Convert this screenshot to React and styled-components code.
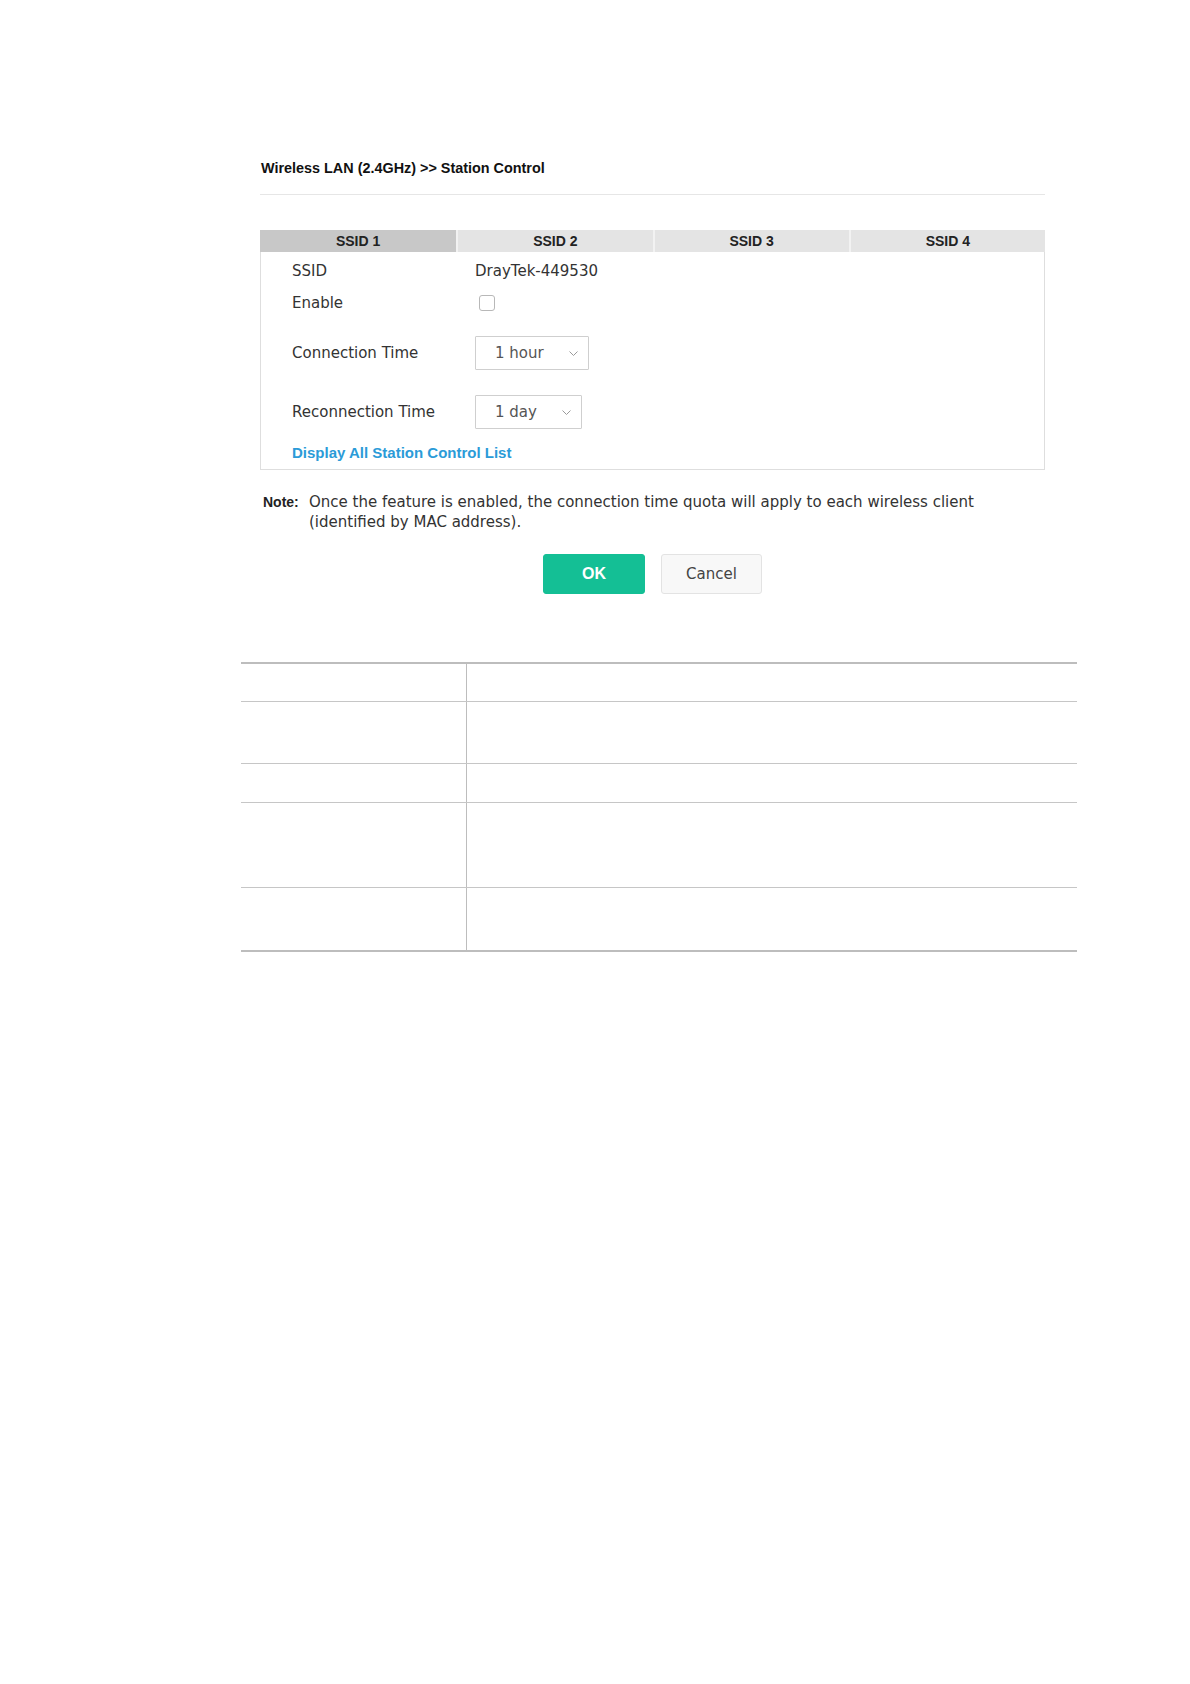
import React from 'react'
import styled, { createGlobalStyle } from 'styled-components'

const GlobalStyle = createGlobalStyle`
  body {
    margin: 0;
    background: #fff;
    font-family: "DejaVu Sans", "Liberation Sans", sans-serif;
    color: #333;
  }
`

const Page = styled.div`
  padding: 158px 0 120px;
`

const Form = styled.section`
  margin-left: 260px;
  width: 785px;
`

const Title = styled.h1`
  margin: 0;
  padding-left: 1px;
  font: bold 14.4px/20px "Liberation Sans", Arial, sans-serif;
  color: #111;
`

const Divider = styled.div`
  height: 1px;
  margin-top: 16px;
  background: #e6e6e6;
`

const Tabs = styled.div`
  display: grid;
  grid-template-columns: repeat(4, 1fr);
  margin-top: 35px;
  height: 22px;
`

const Tab = styled.div`
  background: ${(props) => (props.active ? '#c8c8c8' : '#e4e4e4')};
  border-left: ${(props) => (props.first ? 'none' : '2px solid #f2f2f2')};
  font: bold 14px/22px "Liberation Sans", Arial, sans-serif;
  color: #222;
  text-align: center;
`

const Panel = styled.div`
  border: 1px solid #dedede;
  border-top: none;
  padding: 4px 0 1px 31px;
`

const Row = styled.div`
  display: grid;
  grid-template-columns: 183px auto;
  align-items: center;
  height: ${(props) => props.h}px;
  font-size: 15px;
  color: #333;
`

const Value = styled.div`
  display: flex;
  align-items: center;
`

const Checkbox = styled.span`
  display: block;
  width: 16px;
  height: 16px;
  margin-left: 4px;
  box-sizing: border-box;
  border: 1px solid #b8b8b8;
  border-radius: 3px;
  background: #fff;
`

const Select = styled.div`
  display: inline-flex;
  align-items: center;
  gap: 25px;
  height: 34px;
  box-sizing: border-box;
  padding: 0 10px 0 19px;
  border: 1px solid #cfcfcf;
  border-radius: 1px;
  color: #555;
  font-size: 15px;
`

const Link = styled.a`
  grid-column: 1 / span 2;
  font: bold 15px/20px "Liberation Sans", Arial, sans-serif;
  color: #2b9bd8;
  text-decoration: none;
`

const Note = styled.div`
  display: flex;
  align-items: baseline;
  margin-top: 22px;
  padding-left: 3px;
  line-height: 20px;
`

const NoteLabel = styled.span`
  flex: none;
  width: 46px;
  font: bold 14px "Liberation Sans", Arial, sans-serif;
  color: #222;
`

const NoteText = styled.span`
  font-size: 15px;
  color: #333;
`

const Buttons = styled.div`
  display: flex;
  justify-content: center;
  gap: 16px;
  margin-top: 22px;
`

const Button = styled.button`
  height: 40px;
  width: ${(props) => (props.primary ? 102 : 101)}px;
  border-radius: 3px;
  border: 1px solid ${(props) => (props.primary ? '#14bf95' : '#e3e3e3')};
  background: ${(props) => (props.primary ? '#14bf95' : '#f8f8f8')};
  color: ${(props) => (props.primary ? '#fff' : '#444')};
  font: ${(props) =>
    props.primary
      ? 'bold 16px "Liberation Sans", Arial, sans-serif'
      : '15px "DejaVu Sans", sans-serif'};
  cursor: pointer;
`

const DocTable = styled.div`
  margin: 68px 0 0 241px;
  width: 836px;
  border-top: 2px solid #bdbdbd;
  border-bottom: 2px solid #bdbdbd;
`

const DocRow = styled.div`
  display: grid;
  grid-template-columns: 226px 1fr;
  height: ${(props) => props.h}px;
  box-sizing: border-box;
  border-top: ${(props) => (props.first ? 'none' : '1px solid #c6c6c6')};
`

const DocCell = styled.div`
  border-right: ${(props) => (props.left ? '1px solid #bdbdbd' : 'none')};
`

function Chevron() {
  return (
    <svg width="9" height="5" viewBox="0 0 9 5">
      <polyline points="0.5,0.5 4.5,4.5 8.5,0.5" fill="none" stroke="#9a9a9a" strokeWidth="1" />
    </svg>
  )
}

const tabs = ['SSID 1', 'SSID 2', 'SSID 3', 'SSID 4']
const docRows = [37, 62, 39, 85, 63]

export default function App() {
  return (
    <Page>
      <GlobalStyle />
      <Form>
        <Title>Wireless LAN (2.4GHz) &gt;&gt; Station Control</Title>
        <Divider />
        <Tabs>
          {tabs.map((t, i) => (
            <Tab key={t} active={i === 0} first={i === 0}>{t}</Tab>
          ))}
        </Tabs>
        <Panel>
          <Row h={30}>
            <span>SSID</span>
            <Value>DrayTek-449530</Value>
          </Row>
          <Row h={34}>
            <span>Enable</span>
            <Value><Checkbox /></Value>
          </Row>
          <Row h={66}>
            <span>Connection Time</span>
            <Value>
              <Select>1 hour<Chevron /></Select>
            </Value>
          </Row>
          <Row h={52}>
            <span>Reconnection Time</span>
            <Value>
              <Select>1 day<Chevron /></Select>
            </Value>
          </Row>
          <Row h={30}>
            <Link href="#">Display All Station Control List</Link>
          </Row>
        </Panel>
        <Note>
          <NoteLabel>Note:</NoteLabel>
          <NoteText>
            Once the feature is enabled, the connection time quota will apply to each wireless client (identified by MAC address).
          </NoteText>
        </Note>
        <Buttons>
          <Button primary>OK</Button>
          <Button>Cancel</Button>
        </Buttons>
      </Form>
      <DocTable>
        {docRows.map((h, i) => (
          <DocRow key={i} h={h} first={i === 0}>
            <DocCell left />
            <DocCell />
          </DocRow>
        ))}
      </DocTable>
    </Page>
  )
}
